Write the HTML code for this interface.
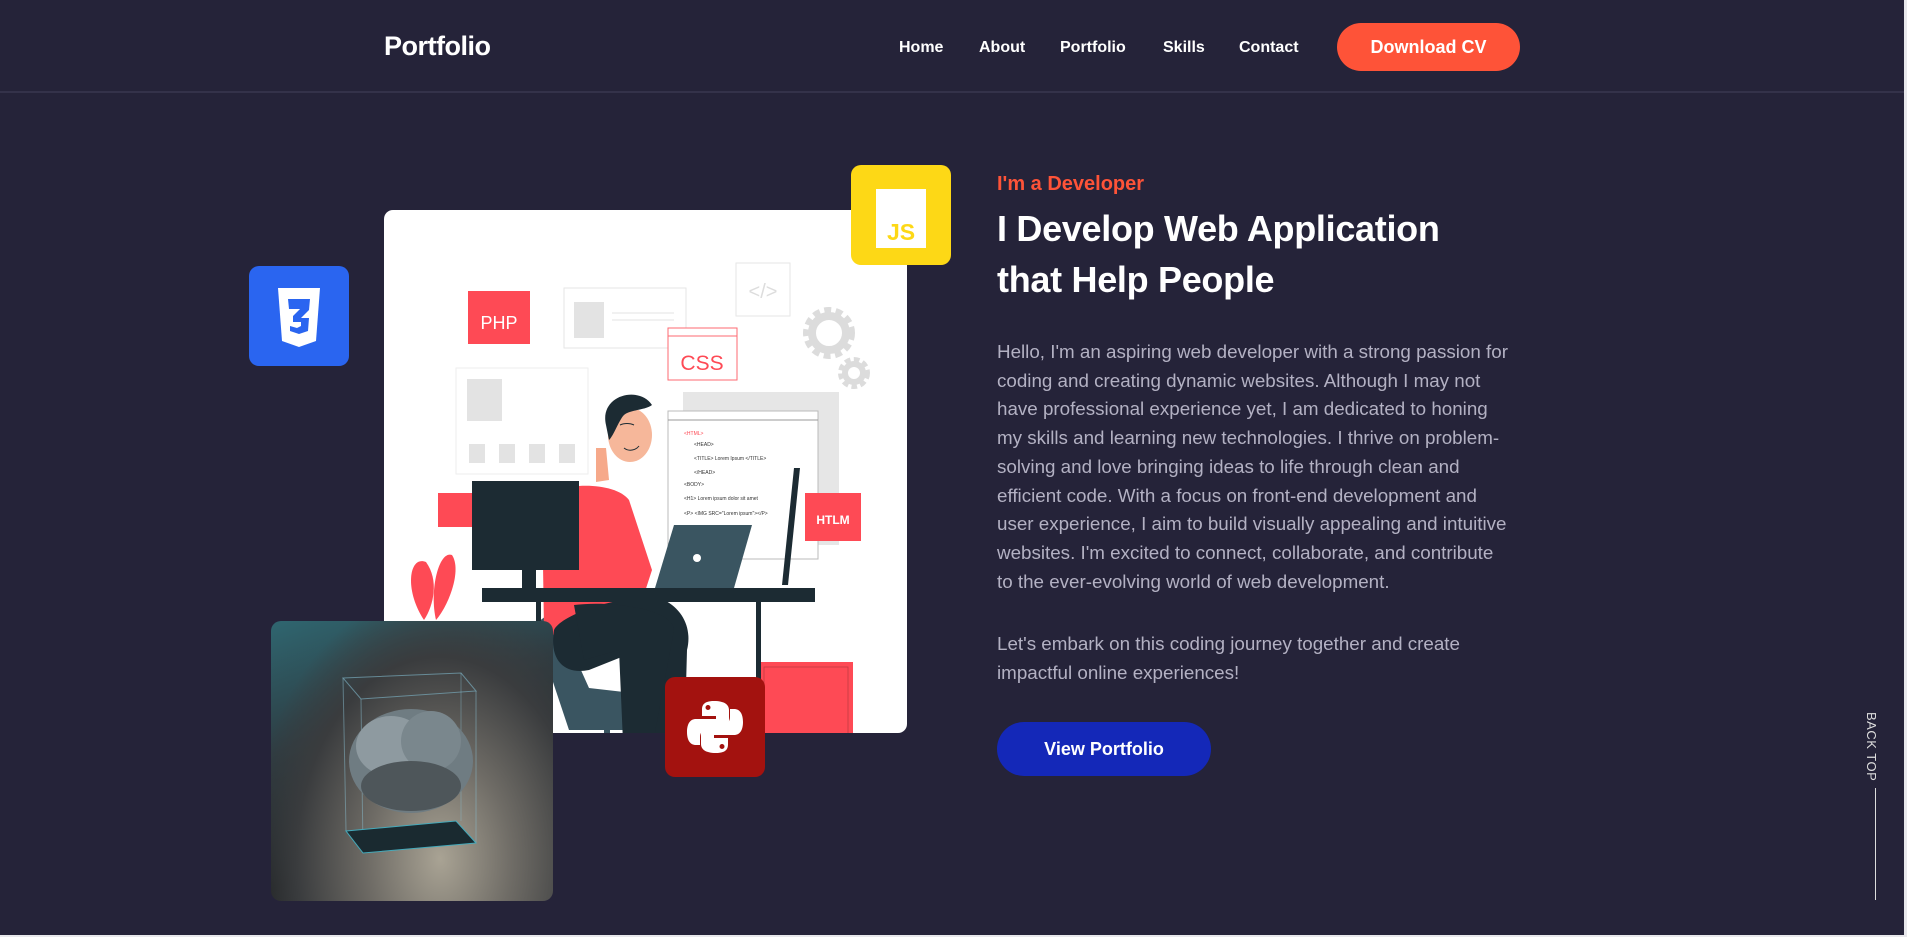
<!DOCTYPE html>
<html><head><meta charset="utf-8"><style>
*{margin:0;padding:0;box-sizing:border-box}
html,body{width:1907px;height:937px;overflow:hidden;background:#252339;font-family:"Liberation Sans",sans-serif;color:#fff}
.nav{position:absolute;left:0;top:0;width:1904px;height:93px;border-bottom:2px solid #34324a;background:#252339}
.logo{position:absolute;left:384px;top:31px;font-size:27px;font-weight:bold;letter-spacing:-0.5px}
.nav a{position:absolute;top:39px;font-size:16px;font-weight:bold;color:#fff;text-decoration:none}
.btn{position:absolute;left:1337px;top:23px;width:183px;height:48px;border-radius:24px;background:#fe5338;color:#fff;font-size:18px;font-weight:bold;text-align:center;line-height:48px}
.card{position:absolute;left:384px;top:210px;width:523px;height:523px;background:#fff;border-radius:9px;overflow:hidden}
.box{position:absolute;width:100px;height:100px;border-radius:10px}
.photo{position:absolute;left:271px;top:621px;width:282px;height:280px;border-radius:10px;overflow:hidden;background:radial-gradient(ellipse at 60% 85%,#a9a394 0%,#6f6c66 30%,#3a3c3e 60%,transparent 80%),linear-gradient(160deg,#2f6670 0%,#2e3c42 35%,#1d2022 70%,#2a2a2a 100%)}
.sub{position:absolute;left:997px;top:173px;font-size:20px;font-weight:bold;color:#fe5338}
h1{position:absolute;left:997px;top:203px;font-size:36px;line-height:51px;font-weight:bold;letter-spacing:-0.3px}
.p{position:absolute;left:997px;width:560px;font-size:18.8px;line-height:28.7px;color:#b3b1c3}
.vp{position:absolute;left:997px;top:722px;width:214px;height:54px;border-radius:27px;background:#1428b8;font-size:18px;font-weight:bold;text-align:center;line-height:54px}
.bt{position:absolute;left:1864px;top:712px;font-size:13px;color:#ddd;writing-mode:vertical-rl;letter-spacing:0.5px}
.bl{position:absolute;left:1875px;top:788px;width:1px;height:112px;background:#ddd}
</style></head><body>
<div class="nav">
<div class="logo">Portfolio</div>
<a style="left:899px">Home</a><a style="left:979px">About</a><a style="left:1060px">Portfolio</a><a style="left:1163px">Skills</a><a style="left:1239px">Contact</a>
<div class="btn">Download CV</div>
</div>
<div style="position:absolute;right:0;top:0;width:3px;height:937px;background:#e8e8ec"></div>
<div style="position:absolute;left:0;bottom:0;width:1907px;height:2px;background:#e8e8ec"></div>

<div class="card">
<svg width="523" height="523" viewBox="0 0 523 523" font-family="Liberation Sans, sans-serif">
<rect x="180" y="78" width="122" height="60" fill="none" stroke="#e6e6e6"/><rect x="190" y="92" width="30" height="36" fill="#e3e3e3"/><line x1="228" y1="103" x2="290" y2="103" stroke="#e3e3e3"/><line x1="228" y1="110" x2="290" y2="110" stroke="#e3e3e3"/>
<rect x="352" y="53" width="54" height="53" fill="none" stroke="#e6e6e6"/><text x="379" y="88" font-size="20" fill="#ddd" text-anchor="middle">&lt;/&gt;</text>
<rect x="84" y="81" width="62" height="53" fill="#fe4a55"/><text x="115" y="119" font-size="18" fill="#fff" text-anchor="middle">PHP</text>
<rect x="284" y="118" width="69" height="52" fill="#fff" stroke="#fe6a72"/><line x1="284" y1="126" x2="353" y2="126" stroke="#fe6a72"/><text x="318" y="160" font-size="21" fill="#fe4a55" text-anchor="middle">CSS</text>
<circle cx="445" cy="123" r="20" fill="none" stroke="#dcdcdc" stroke-width="12" stroke-dasharray="6 4"/><circle cx="445" cy="123" r="17" fill="none" stroke="#dcdcdc" stroke-width="8"/>
<circle cx="470" cy="163" r="12" fill="none" stroke="#dcdcdc" stroke-width="8" stroke-dasharray="5 3"/><circle cx="470" cy="163" r="9" fill="none" stroke="#dcdcdc" stroke-width="6"/>
<rect x="72" y="158" width="132" height="106" fill="none" stroke="#eee"/><rect x="83" y="169" width="35" height="42" fill="#e3e3e3"/>
<rect x="85" y="234" width="16" height="19" fill="#e3e3e3"/><rect x="115" y="234" width="16" height="19" fill="#e3e3e3"/><rect x="145" y="234" width="16" height="19" fill="#e3e3e3"/><rect x="175" y="234" width="16" height="19" fill="#e3e3e3"/>
<rect x="299" y="182" width="156" height="153" fill="#e6e6e6"/>
<rect x="284" y="201" width="150" height="148" fill="#fff" stroke="#bbb"/><line x1="284" y1="210" x2="434" y2="210" stroke="#999"/>
<text x="300" y="225" font-size="5" fill="#fe4a55">&lt;HTML&gt;</text><text x="310" y="236" font-size="5" fill="#333">&lt;HEAD&gt;</text><text x="310" y="250" font-size="5" fill="#333">&lt;TITLE&gt; Lorem Ipsum &lt;/TITLE&gt;</text><text x="310" y="264" font-size="5" fill="#333">&lt;/HEAD&gt;</text><text x="300" y="276" font-size="5" fill="#333">&lt;BODY&gt;</text><text x="300" y="290" font-size="5" fill="#333">&lt;H1&gt; Lorem ipsum dolor sit amet</text><text x="300" y="305" font-size="5" fill="#333">&lt;P&gt; &lt;IMG SRC="Lorem ipsum"&gt;&lt;/P&gt;</text>
<rect x="421" y="283" width="56" height="48" fill="#fe4a55"/><text x="449" y="314" font-size="12" font-weight="bold" fill="#fff" text-anchor="middle">HTLM</text>
<rect x="54" y="283" width="34" height="34" fill="#fe4a55"/>
<polygon points="410,258 416,258 404,375 398,375" fill="#1c2b33"/>
<rect x="102" y="453" width="46" height="70" fill="#1c2b33"/><circle cx="125" cy="498" r="3" fill="#fe4a55"/>
<path d="M40 410 C20 380 25 345 42 352 C55 370 50 395 40 410Z" fill="#fe4a55"/><path d="M52 410 C45 380 55 340 68 345 C78 360 65 395 52 410Z" fill="#fe4a55"/>
<rect x="375" y="452" width="94" height="118" fill="#fe4a55"/><rect x="380" y="457" width="84" height="108" fill="none" stroke="#c23a42" stroke-width="0.8"/>
<line x1="168" y1="570" x2="494" y2="570" stroke="#bbb"/>
<path d="M150 415 L185 520 L300 520 L310 490 L205 478 L170 400Z" fill="#3a5561"/><rect x="220" y="505" width="6" height="50" fill="#3a5561"/><path d="M180 560 L265 560 L225 550Z" fill="#3a5561"/>
<path d="M158 290 C170 272 230 270 245 290 L268 360 L255 400 L180 430 L160 420Z" fill="#fe4a55"/>
<path d="M170 420 C180 400 260 380 280 390 C300 400 308 420 303 440 L300 550 L270 550 L255 440 L205 460 C180 465 165 450 170 420Z" fill="#1c2b33"/>
<path d="M190 395 C230 390 290 400 290 420 L265 555 L240 555 L235 440 L200 450Z" fill="#1c2b33"/>
<rect x="262" y="545" width="22" height="10" fill="#fe4a55"/><rect x="290" y="545" width="22" height="10" fill="#fe4a55"/>
<path d="M212 238 L222 238 L225 270 L212 272Z" fill="#f6a98a"/>
<ellipse cx="246" cy="225" rx="22" ry="27" fill="#f6b79a"/>
<path d="M222 215 C215 185 255 175 268 195 C262 200 245 200 240 205 C235 210 230 225 225 230Z" fill="#1c2b33"/>
<path d="M236 215 C240 213 246 213 250 215" stroke="#1c2b33" fill="none"/><path d="M240 238 C245 242 252 240 255 236" stroke="#1c2b33" fill="none"/>
<rect x="88" y="271" width="107" height="89" fill="#1c2b33"/><rect x="138" y="360" width="14" height="18" fill="#1c2b33"/>
<polygon points="290,315 368,315 350,378 271,378" fill="#3a5561"/><circle cx="313" cy="348" r="4" fill="#fff"/>
<rect x="98" y="378" width="333" height="14" fill="#1c2b33"/>
<rect x="152" y="392" width="5" height="179" fill="#1c2b33"/><rect x="372" y="392" width="5" height="179" fill="#1c2b33"/>
</svg>
</div>

<div class="box" style="left:851px;top:165px;background:#fdd816">
<div style="position:absolute;left:25px;top:24px;width:50px;height:59px;background:#fff"></div>
<div style="position:absolute;left:36px;top:54px;font-size:23px;font-weight:bold;color:#fdd816">JS</div>
</div>
<div class="box" style="left:249px;top:266px;background:#2a65f0">
<svg width="100" height="100" viewBox="0 0 100 100"><path d="M29 22 L71 22 L67 75 L50 81 L33 75Z" fill="#fff"/><path d="M39 33 L61 33 L60 44 L52 52 L60 52 L59 65 L50 68 L41 65 L41 60 L48 62 L52 60 L52 56 L44 56 L44 50 L51 43 L40 43Z" fill="#2a65f0"/></svg>
</div>
<div class="photo">
<svg width="282" height="280" viewBox="0 0 282 280"><polygon points="72,57 190,52 205,70 90,78" fill="none" stroke="#7ab" stroke-width="1" opacity=".7"/><line x1="72" y1="57" x2="75" y2="210" stroke="#8bc" opacity=".5"/><line x1="90" y1="78" x2="92" y2="230" stroke="#8bc" opacity=".5"/><line x1="205" y1="70" x2="205" y2="222" stroke="#8bc" opacity=".5"/><line x1="190" y1="52" x2="190" y2="200" stroke="#8bc" opacity=".4"/>
<ellipse cx="140" cy="140" rx="62" ry="52" fill="#6f7c82"/><ellipse cx="120" cy="125" rx="35" ry="30" fill="#8e9aa0"/><ellipse cx="160" cy="120" rx="30" ry="30" fill="#7a878d"/><ellipse cx="140" cy="165" rx="50" ry="25" fill="#4e565a"/>
<polygon points="75,210 185,200 205,222 92,232" fill="#1a2a30" stroke="#4ab" stroke-width="1"/></svg>
</div>
<div class="box" style="left:665px;top:677px;background:#a3120f">
<svg width="100" height="100" viewBox="0 0 100 100" fill="#fff"><path d="M49 24 C38 24 37 29 37 33 L37 39 L51 39 L51 42 L31 42 C25 42 22 47 22 55 C22 63 25 68 31 68 L35 68 L35 60 C35 55 39 51 44 51 L57 51 C61 51 64 48 64 44 L64 33 C64 28 60 24 49 24Z M43 28 A2.5 2.5 0 1 1 43 33 A2.5 2.5 0 1 1 43 28Z"/><path d="M51 76 C62 76 63 71 63 67 L63 61 L49 61 L49 58 L69 58 C75 58 78 53 78 45 C78 37 75 32 69 32 L65 32 L65 40 C65 45 61 49 56 49 L43 49 C39 49 36 52 36 56 L36 67 C36 72 40 76 51 76Z M57 72 A2.5 2.5 0 1 1 57 67 A2.5 2.5 0 1 1 57 72Z"/></svg>
</div>

<div class="sub">I'm a Developer</div>
<h1>I Develop Web Application<br>that Help People</h1>
<div class="p" style="top:338px">Hello, I'm an aspiring web developer with a strong passion for<br>coding and creating dynamic websites. Although I may not<br>have professional experience yet, I am dedicated to honing<br>my skills and learning new technologies. I thrive on problem-<br>solving and love bringing ideas to life through clean and<br>efficient code. With a focus on front-end development and<br>user experience, I aim to build visually appealing and intuitive<br>websites. I'm excited to connect, collaborate, and contribute<br>to the ever-evolving world of web development.</div>
<div class="p" style="top:630px">Let's embark on this coding journey together and create<br>impactful online experiences!</div>
<div class="vp">View Portfolio</div>
<div class="bt">BACK TOP</div><div class="bl"></div>
</body></html>
